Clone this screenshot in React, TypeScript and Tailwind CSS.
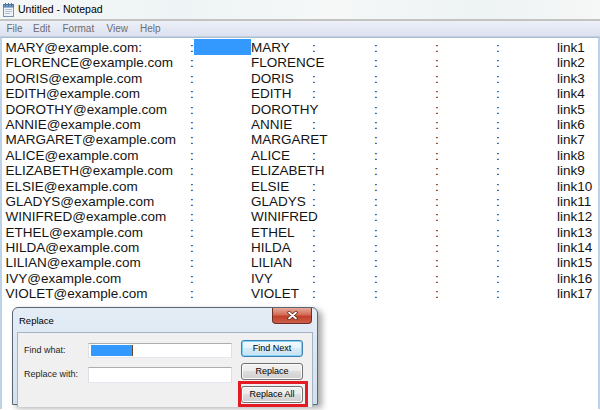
const rows: [string, string, boolean][] = [
  ['MARY@example.com:', 'MARY', true],
  ['FLORENCE@example.com', 'FLORENCE', false],
  ['DORIS@example.com', 'DORIS', true],
  ['EDITH@example.com', 'EDITH', true],
  ['DOROTHY@example.com', 'DOROTHY', false],
  ['ANNIE@example.com', 'ANNIE', true],
  ['MARGARET@example.com', 'MARGARET', false],
  ['ALICE@example.com', 'ALICE', true],
  ['ELIZABETH@example.com', 'ELIZABETH', false],
  ['ELSIE@example.com', 'ELSIE', true],
  ['GLADYS@example.com', 'GLADYS', true],
  ['WINIFRED@example.com', 'WINIFRED', false],
  ['ETHEL@example.com', 'ETHEL', true],
  ['HILDA@example.com', 'HILDA', true],
  ['LILIAN@example.com', 'LILIAN', true],
  ['IVY@example.com', 'IVY', true],
  ['VIOLET@example.com', 'VIOLET', true],
]

const btn =
  'flex h-[17px] w-[62px] items-center justify-center rounded-[3px] border text-[9px] text-black'
const btnNormal =
  'border-[#707070] bg-[linear-gradient(#f2f2f2,#ebebeb_50%,#dddddd_50%,#cfcfcf)] shadow-[inset_0_0_0_1px_#fbfbfb]'

function NotepadIcon() {
  return (
    <svg width="13" height="15" viewBox="0 0 13 15">
      <rect x="1.5" y="2.5" width="10" height="12" fill="#eef4fa" stroke="#7893ad" />
      <rect x="1.5" y="2.5" width="10" height="2.5" fill="#6d9fd3" stroke="#4f7aa8" />
      <path d="M3 7.5h7M3 9.5h7M3 11.5h5" stroke="#9fb4c8" strokeWidth="0.8" />
      <path d="M3.5 1v3M6.5 1v3M9.5 1v3" stroke="#5b6f82" strokeWidth="1" />
    </svg>
  )
}

function ReplaceDialog() {
  return (
    <div className="absolute left-[12px] top-[307px] flex h-[98px] w-[306px] flex-col rounded-t-[6px] border border-[#5a6673] bg-[linear-gradient(#e4edf6,#d3e0ee)] font-['Liberation_Sans',Arial,sans-serif] shadow-[4px_3px_6px_rgba(0,0,0,0.35)]">
      <div className="absolute right-[5px] top-0 flex h-[16px] w-[40px] items-center justify-center rounded-b-[4px] border border-t-0 border-[#6e2d25] bg-[linear-gradient(#e9a898,#d46b58_45%,#c2402b_55%,#cc5f48)]">
        <svg width="11" height="9" viewBox="0 0 11 9">
          <path d="M2 1.5l7 6M9 1.5l-7 6" stroke="#5b1d14" strokeWidth="3.2" strokeLinecap="round" />
          <path d="M2 1.5l7 6M9 1.5l-7 6" stroke="#ffffff" strokeWidth="1.8" strokeLinecap="round" />
        </svg>
      </div>
      <div className="h-[24px] pl-[6px] text-[9.5px] leading-[26px] text-black">Replace</div>
      <div className="mx-[4px] flex flex-1 border border-b-0 border-[#a3b3c4] bg-[#f0f0f0] pl-[6px] pt-[7px]">
        <div className="mt-[3px] grid grid-cols-[64px_144px] content-start items-center gap-y-[9px] text-[9px] text-[#1e1e1e]">
          <span>Find what:</span>
          <div className="flex h-[15px] items-center border border-[#abadb3] border-b-[#e3e9ef] border-x-[#dbdfe6] bg-white pl-[2px]">
            <div className="h-[11px] w-[41px] bg-[#3399ff]" />
            <div className="h-[11px] w-[1px] bg-[#6b4a2a]" />
          </div>
          <span>Replace with:</span>
          <div className="h-[16px] border border-[#abadb3] border-b-[#e3e9ef] border-x-[#dbdfe6] bg-white" />
        </div>
        <div className="ml-[9px] flex flex-col">
          <div className={`${btn} border-[#3c7fb1] bg-[linear-gradient(#f2f9fd,#e6f3fa_50%,#d5ebf7_50%,#c8e3f3)] shadow-[inset_0_0_0_1px_#7fd2f2]`}>
            Find Next
          </div>
          <div className={`${btn} ${btnNormal} mt-[6px]`}>Replace</div>
          <div className="-ml-[3px] mt-[1px] w-[70px] border-[3px] border-[#e41b23] pb-[1px] pt-[2px]">
            <div className={`${btn} ${btnNormal}`}>Replace All</div>
          </div>
        </div>
      </div>
    </div>
  )
}

export default function App() {
  return (
    <div className="relative h-[410px] w-[600px] overflow-hidden bg-white font-['Liberation_Sans',Arial,sans-serif]">
      <div className="flex h-[19px] items-center gap-[3px] bg-[linear-gradient(90deg,#f5f7f7,#eef4f5_30%,#f6f8f8_55%,#eef3f4_80%,#f6f7f7)] pl-[2px]">
        <NotepadIcon />
        <span className="text-[10.5px] text-black">Untitled - Notepad</span>
      </div>
      <div className="h-[2px] bg-[#c3c3c3]" />
      <div className="flex h-[16px] items-center border-b border-[#c9cedb] bg-[linear-gradient(#edf0f8,#dce1f1)] pl-[6.5px] text-[10px] text-[#6d6d6d]">
        <span className="w-[26.5px]">File</span>
        <span className="w-[29.5px]">Edit</span>
        <span className="w-[44px]">Format</span>
        <span className="w-[33.5px]">View</span>
        <span>Help</span>
      </div>
      <div className="h-[372px] border-x-2 border-t border-x-[#bcd2e7] border-t-[#a4bed7] pl-[3.5px] pt-[2px] text-[13.5px] text-[#141414]">
        {rows.map(([email, name, colon2], i) => (
          <div
            key={name}
            className="grid h-[15.4px] grid-cols-[184.5px_61px_61px_62px_61px_61px_61px_1fr] whitespace-nowrap leading-[15.4px]"
          >
            <span>{email}</span>
            {i === 0 ? (
              <div className="flex">
                <span>:</span>
                <span className="-mt-[1px] h-[16px] flex-1 bg-[#3399ff]" />
              </div>
            ) : (
              <span>:</span>
            )}
            <span>{name}</span>
            <span>{colon2 ? ':' : ''}</span>
            <span>:</span>
            <span>:</span>
            <span>:</span>
            <span>link{i + 1}</span>
          </div>
        ))}
      </div>
      <ReplaceDialog />
    </div>
  )
}
